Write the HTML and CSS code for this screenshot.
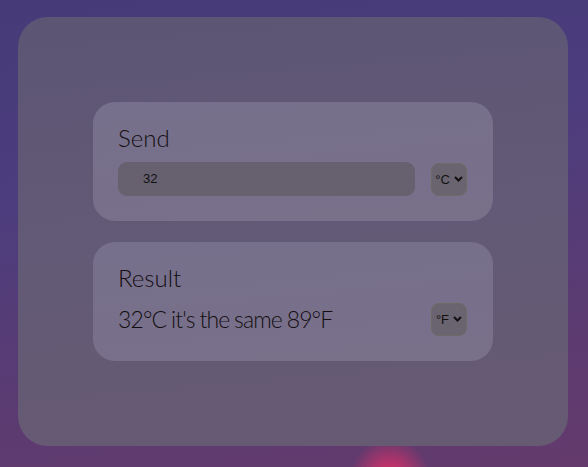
FILE: index.html
```html
<!DOCTYPE html>
<html lang="en">
<head>
<meta charset="utf-8">
<title>Converter</title>
<link rel="stylesheet" href="styles.css">
</head>
<body>
<main class="panel">
  <section class="card">
    <h2 class="title">Send</h2>
    <div class="row">
      <div class="input">32</div>
      <div class="select"><span>°C</span><svg width="9" height="6" viewBox="0 0 9 6"><path d="M1 1 L4.5 4.5 L8 1" fill="none" stroke="#111" stroke-width="2"/></svg></div>
    </div>
  </section>
  <section class="card">
    <h2 class="title">Result</h2>
    <div class="row">
      <div class="result">32°C it's the same 89°F</div>
      <div class="select"><span>°F</span><svg width="9" height="6" viewBox="0 0 9 6"><path d="M1 1 L4.5 4.5 L8 1" fill="none" stroke="#111" stroke-width="2"/></svg></div>
    </div>
  </section>
</main>
</body>
</html>
```
FILE: styles.css
```css
html, body {
  margin: 0;
  height: 100%;
  overflow: hidden;
}
body {
  background:
    radial-gradient(circle at 390px 478px, #d8306a 0, rgba(216,48,106,0.75) 14px, rgba(200,45,110,0) 40px),
    linear-gradient(170deg, #463b78 0%, #4c3d7e 35%, #5a3b72 70%, #643a6c 100%);
  font-family: Lato, "Noto Sans", sans-serif;
  color: #140e10;
  padding: 17px 20px 21px 18px;
  box-sizing: border-box;
}
.panel {
  height: 429px;
  border-radius: 30px;
  background: linear-gradient(175deg, #5c5574 0%, #625a76 50%, #675a73 100%);
  display: flex;
  flex-direction: column;
  align-items: center;
  padding-top: 85px;
  box-sizing: border-box;
  gap: 21px;
}
.card {
  width: 400px;
  height: 119px;
  box-sizing: border-box;
  border-radius: 22px;
  background: linear-gradient(175deg, #76708c 0%, #79708a 100%);
  padding: 20px 26px 0 25px;
}
.title {
  margin: 0 0 8px;
  font-size: 24px;
  font-weight: 300;
  line-height: 32px;
}
.row {
  display: flex;
  align-items: center;
  justify-content: space-between;
  height: 34px;
}
.input {
  width: 297px;
  height: 34px;
  box-sizing: border-box;
  border-radius: 9px;
  background: #67606f;
  font-family: "Liberation Sans", Arial, sans-serif;
  font-size: 13px;
  line-height: 34px;
  padding-left: 25px;
  color: #111;
}
.result {
  font-size: 23px;
  font-weight: 300;
  line-height: 34px;
  letter-spacing: -0.9px;
  word-spacing: -0.5px;
}
.select {
  width: 36px;
  height: 33px;
  box-sizing: border-box;
  border-radius: 8px;
  background: #6a6470;
  border: 1px solid #6c6a64;
  display: flex;
  align-items: center;
  justify-content: center;
  gap: 4px;
  font-family: "Liberation Sans", Arial, sans-serif;
  font-size: 13px;
  color: #111;
}
.select svg {
  display: block;
}
```
